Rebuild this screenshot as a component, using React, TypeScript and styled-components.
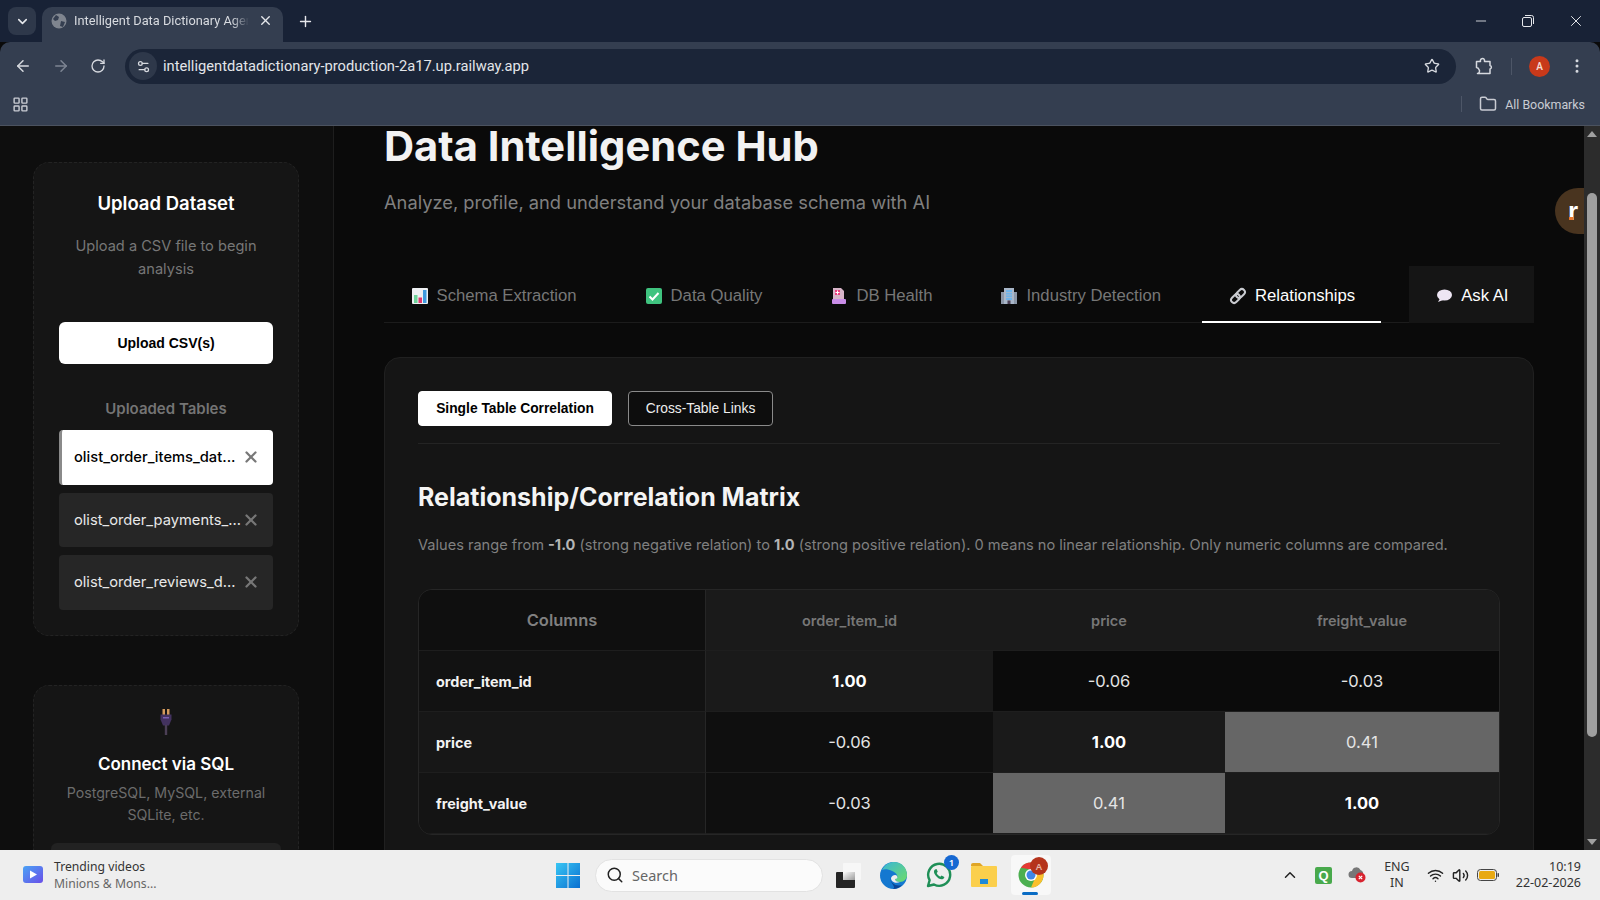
import React, { FunctionComponent } from 'react';
import styled, { createGlobalStyle } from 'styled-components';
import {
  ArrowLeft,
  ArrowRight,
  ChevronDown,
  ChevronUp,
  EllipsisVertical,
  Folder,
  LayoutGrid,
  Minus,
  Plus,
  RotateCw,
  Search,
  Settings2,
  Star,
  Volume2,
  Wifi,
  X,
} from 'lucide-react';

const SEGOE = '"Noto Sans", "Open Sans", sans-serif';
const CHROME = 'Roboto, "Noto Sans", sans-serif';
const INTER = 'Inter, "Liberation Sans", sans-serif';
const ARIAL = '"Liberation Sans", Arial, sans-serif';

const GlobalStyle = createGlobalStyle`
  html, body, #root {
    margin: 0;
    height: 100%;
    overflow: hidden;
  }

  body {
    background: #0a0a0a;
    font-family: ${INTER};
  }

  * {
    box-sizing: border-box;
  }
`;

const Screen = styled.div`
  display: flex;
  flex-direction: column;
  width: 1600px;
  height: 900px;
  overflow: hidden;
  position: relative;
`;

/* browser chrome */

const TabStrip = styled.div`
  display: flex;
  align-items: flex-end;
  height: 42px;
  padding-left: 8px;
  background: #182236;
  color: #e6e8ec;
  font-family: ${CHROME};
`;

const TabSearch = styled.div`
  display: flex;
  align-items: center;
  justify-content: center;
  width: 28px;
  height: 28px;
  margin-bottom: 7px;
  border-radius: 8px;
  background: #2e384a;
`;

const Tab = styled.div`
  display: flex;
  align-items: center;
  width: 241px;
  height: 35px;
  margin-left: 6px;
  padding: 0 10px 8px 9px;
  border-radius: 10px 10px 0 0;
  background: #343e50;
`;

const TabTitle = styled.span`
  flex: 1;
  margin: 0 9px 0 7px;
  overflow: hidden;
  white-space: nowrap;
  font-size: 12.8px;
  color: #d8dbe0;
  -webkit-mask-image: linear-gradient(90deg, #000 90%, transparent);
  mask-image: linear-gradient(90deg, #000 90%, transparent);
`;

const NewTab = styled.div`
  display: flex;
  align-self: center;
  margin-left: 14px;
`;

const WindowControls = styled.div`
  display: flex;
  align-self: center;
  align-items: center;
  gap: 33px;
  margin-left: auto;
  padding-right: 15px;
`;

const Toolbar = styled.div`
  display: flex;
  align-items: center;
  height: 46px;
  padding: 2px 14px 0 14px;
  border-radius: 10px 10px 0 0;
  background: #343e50;
  color: #d6d9df;
  font-family: ${CHROME};
`;

const NavButtons = styled.div`
  display: flex;
  align-items: center;
  gap: 20px;
`;

const Omnibox = styled.div`
  display: flex;
  align-items: center;
  width: 1331px;
  height: 35px;
  margin-left: 19px;
  padding: 0 16px 0 4px;
  border-radius: 18px;
  background: #1b2538;
`;

const SiteInfo = styled.div`
  display: flex;
  align-items: center;
  justify-content: center;
  width: 28px;
  height: 28px;
  border-radius: 50%;
  background: #2e384a;
`;

const Url = styled.span`
  flex: 1;
  margin-left: 6px;
  font-size: 14.7px;
  color: #e3e5ea;
`;

const ToolbarEnd = styled.div`
  display: flex;
  align-items: center;
  margin-left: 19px;
`;

const ToolbarDivider = styled.div`
  width: 1px;
  height: 17px;
  margin: 0 17px 0 18px;
  background: #4d5667;
`;

const Avatar = styled.div`
  display: flex;
  align-items: center;
  justify-content: center;
  width: 21px;
  height: 21px;
  border-radius: 50%;
  background: #c8391a;
  color: #f4d9d0;
  font-size: 10px;
  font-weight: 600;
`;

const ToolbarMenu = styled.div`
  display: flex;
  margin-left: 18px;
`;

const Bookmarks = styled.div`
  display: flex;
  align-items: center;
  height: 38px;
  padding: 0 15px 5px 12px;
  border-bottom: 1px solid #4b525f;
  background: #343e50;
  color: #c9ccd3;
  font-family: ${CHROME};
`;

const BookmarksEnd = styled.div`
  display: flex;
  align-items: center;
  gap: 8px;
  margin-left: auto;
  font-size: 12.4px;
`;

const BookmarksDivider = styled.div`
  width: 1px;
  height: 16px;
  margin-right: 9px;
  background: #4d5667;
`;

/* page */

const Viewport = styled.div`
  display: flex;
  flex: 1;
  min-height: 0;
  overflow: hidden;
  position: relative;
  background: #0a0a0a;
`;

const Sidebar = styled.aside`
  display: flex;
  flex-direction: column;
  flex: 0 0 334px;
  gap: 49px;
  padding: 36px 34px 0 33px;
  border-right: 1px solid #1e1e1e;
  background: #0e0e0e;
`;

const SideCard = styled.section`
  display: flex;
  flex-direction: column;
  flex: 0 0 auto;
  padding: 26px 25px 25px;
  border: 1px dashed #232323;
  border-radius: 16px;
  background: #151515;
  text-align: center;
`;

const SideTitle = styled.h3`
  margin: 0;
  font-size: 18.5px;
  line-height: 28px;
  font-weight: 600;
  color: #fff;
`;

const SideText = styled.p`
  margin: 18px 0 0;
  font-size: 14.6px;
  line-height: 23px;
  color: #777;
`;

const UploadButton = styled.button`
  height: 42px;
  margin-top: 41px;
  border: 0;
  border-radius: 6px;
  background: #fff;
  color: #000;
  font-family: ${ARIAL};
  font-size: 14px;
  font-weight: 700;
`;

const SideLabel = styled.div`
  margin-top: 35px;
  font-size: 15px;
  line-height: 20px;
  font-weight: 600;
  color: #747474;
`;

const FileList = styled.div`
  display: flex;
  flex-direction: column;
  gap: 8px;
  margin-top: 11px;
`;

const FileItem = styled.div<{ $active?: boolean }>`
  display: flex;
  align-items: center;
  justify-content: space-between;
  height: 54.5px;
  padding: 0 13px 0 ${({ $active }) => ($active ? '12px' : '15px')};
  border-left: ${({ $active }) => ($active ? '3px solid #8a8a8a' : '0')};
  border-radius: 4px;
  background: ${({ $active }) => ($active ? '#fff' : '#262626')};
  color: ${({ $active }) => ($active ? '#000' : '#e8e8e8')};
  font-size: 14.7px;
  font-weight: ${({ $active }) => ($active ? 500 : 400)};
  white-space: nowrap;
`;

const ConnectCard = styled(SideCard)`
  padding: 23px 17px 0;
`;

const ConnectTitle = styled(SideTitle)`
  margin-top: 11px;
  font-size: 17px;
`;

const ConnectText = styled(SideText)`
  margin-top: 4px;
  font-size: 14.2px;
  line-height: 22.5px;
  letter-spacing: 0;
  color: #6c6c6c;
`;

const ConnectInput = styled.div`
  height: 36px;
  margin-top: 16px;
  border-radius: 6px;
  background: #222;
`;

const Main = styled.main`
  flex: 1;
  min-width: 0;
  padding: 0 50px;
`;

const Heading = styled.h1`
  margin: 0;
  font-size: 41.7px;
  line-height: 40px;
  font-weight: 700;
  color: #f2f2f2;
`;

const Subtitle = styled.p`
  margin: 22px 0 0;
  font-size: 18.3px;
  line-height: 28px;
  color: #808080;
`;

const Tabs = styled.nav`
  display: flex;
  gap: 16px;
  margin-top: 50px;
  border-bottom: 1px solid #1c1c1c;
`;

const TabButton = styled.div<{ $active?: boolean; $end?: boolean }>`
  display: flex;
  align-items: center;
  gap: 8px;
  height: 57px;
  margin-bottom: -1px;
  margin-left: ${({ $end }) => ($end ? 'auto' : '0')};
  padding: 5px 25.5px 0 26.5px;
  border-bottom: 2px solid ${({ $active }) => ($active ? '#fff' : 'transparent')};
  background: ${({ $end }) => ($end ? '#151515' : 'transparent')};
  color: ${({ $active, $end }) => ($active || $end ? '#fff' : '#777')};
  font-family: ${ARIAL};
  font-size: 16.7px;
  white-space: nowrap;
`;

const Panel = styled.section`
  margin-top: 34px;
  padding: 33px;
  border: 1px solid #202020;
  border-radius: 16px;
  background: #151515;
`;

const SubTabs = styled.div`
  display: flex;
  gap: 16px;
  padding-bottom: 17px;
  border-bottom: 1px solid #242424;
`;

const SubTab = styled.div<{ $active?: boolean }>`
  display: flex;
  align-items: center;
  justify-content: center;
  height: 35px;
  padding: 0 0 1px;
  width: ${({ $active }) => ($active ? '194px' : '145px')};
  border: 1px solid ${({ $active }) => ($active ? '#fff' : '#8a8a8a')};
  border-radius: 4px;
  background: ${({ $active }) => ($active ? '#fff' : '#0d0d0d')};
  color: ${({ $active }) => ($active ? '#000' : '#eee')};
  font-family: ${ARIAL};
  font-size: 13.8px;
  font-weight: ${({ $active }) => ($active ? 700 : 400)};
`;

const MatrixTitle = styled.h2`
  margin: 35px 0 0;
  font-size: 25px;
  line-height: 36px;
  font-weight: 700;
  color: #f4f4f4;
`;

const MatrixNote = styled.p`
  margin: 18px 0 0;
  font-size: 14.58px;
  line-height: 24px;
  color: #808080;

  strong {
    color: #b5b5b5;
    font-weight: 700;
  }
`;

const MatrixGrid = styled.div`
  display: grid;
  grid-template-columns: 287px 287px 232px 1fr;
  grid-auto-rows: 61px;
  margin-top: 32px;
  overflow: hidden;
  border: 1px solid #262626;
  border-radius: 14px;
`;

const Cell = styled.div<{ $bg: string; $color?: string; $bold?: boolean; $left?: boolean; $size?: number; $rule?: boolean }>`
  display: flex;
  align-items: center;
  justify-content: ${({ $left }) => ($left ? 'flex-start' : 'center')};
  padding-left: ${({ $left }) => ($left ? '17px' : '0')};
  border-right: ${({ $rule }) => ($rule ? '1px solid #262626' : '0')};
  border-bottom: 1px solid #1e1e1e;
  background: ${({ $bg }) => $bg};
  color: ${({ $color }) => $color || '#e4e4e4'};
  font-size: ${({ $size }) => $size || 16.5}px;
  font-weight: ${({ $bold }) => ($bold ? 700 : 400)};
`;

const HeadCell = styled(Cell)`
  font-weight: 600;
`;

const ScrollTrack = styled.div`
  display: flex;
  flex-direction: column;
  align-items: center;
  flex: 0 0 16px;
  background: #2c2c2c;
`;

const ScrollArrow = styled.div<{ $down?: boolean }>`
  flex: 0 0 auto;
  width: 0;
  height: 0;
  margin: 5px 0;
  border-left: 5px solid transparent;
  border-right: 5px solid transparent;
  border-top: ${({ $down }) => ($down ? '6px solid #a0a0a0' : '0')};
  border-bottom: ${({ $down }) => ($down ? '0' : '6px solid #a0a0a0')};
`;

const ScrollThumb = styled.div`
  width: 10px;
  height: 544px;
  margin-top: 51px;
  margin-bottom: auto;
  border-radius: 5px;
  background: #9f9f9f;
`;

/* floats over the page, half hidden under the scrollbar */
const RailwayBadge = styled.div`
  position: absolute;
  top: 62px;
  right: 16px;
  display: flex;
  align-items: center;
  width: 29px;
  height: 46px;
  padding-left: 13px;
  border-radius: 23px 0 0 23px;
  background: #49341f;
  color: #fff;
  font-family: ${ARIAL};
  font-size: 26px;
  font-weight: 700;

  &:after {
    content: '';
    position: absolute;
    top: 29px;
    left: 14px;
    width: 4px;
    height: 3px;
    background: #e8772e;
  }
`;

/* taskbar */

const Taskbar = styled.footer`
  display: flex;
  align-items: center;
  flex: 0 0 50px;
  background: #eeeeee;
  color: #222;
  font-family: ${SEGOE};
`;

const Widget = styled.div`
  display: flex;
  align-items: center;
  gap: 11px;
  width: 556px;
  padding-left: 23px;
`;

const WidgetText = styled.div`
  font-size: 12.2px;
  line-height: 17px;
  color: #333;

  span {
    display: block;
    color: #666;
  }
`;

const Dock = styled.div`
  display: flex;
  align-items: center;
`;

const SearchBox = styled.div`
  display: flex;
  align-items: center;
  gap: 8px;
  width: 228px;
  height: 33px;
  margin: 0 3px 0 15px;
  padding-left: 10px;
  border: 1px solid #e2e2e2;
  border-radius: 17px;
  background: #fbfbfb;
  color: #666;
  font-size: 14.5px;
`;

const DockSlot = styled.div`
  position: relative;
  display: flex;
  align-items: center;
  justify-content: center;
  width: 45px;
  height: 40px;
`;

const ChromeSlot = styled(DockSlot)`
  width: 40px;
  margin-left: 5px;
  border-radius: 4px;
  background: #f8f8f8;

  &:after {
    content: '';
    position: absolute;
    bottom: 0;
    left: 11px;
    width: 16px;
    height: 3px;
    border-radius: 2px;
    background: #0a6cc4;
  }
`;

const Badge = styled.div<{ $bg: string }>`
  position: absolute;
  top: 0;
  right: 2px;
  display: flex;
  align-items: center;
  justify-content: center;
  width: 15px;
  height: 15px;
  border-radius: 50%;
  background: ${({ $bg }) => $bg};
  color: #fff;
  font-size: 9.5px;
  font-weight: 600;
`;

const ChromeBadge = styled(Badge)`
  top: 2px;
  right: 3px;
  width: 18px;
  height: 18px;
  color: #e6b4a6;
`;

const Tray = styled.div`
  display: flex;
  align-items: center;
  margin-left: auto;
  padding-right: 19px;
`;

const TrayIcon = styled.span<{ $gap?: number }>`
  display: flex;
  margin-left: ${({ $gap }) => $gap || 0}px;
`;

const Lang = styled.div`
  margin: 0 17px 0 18px;
  font-size: 12.5px;
  line-height: 16px;
  text-align: center;
  color: #333;
`;

const Clock = styled.div`
  margin-left: 17px;
  font-size: 12.5px;
  line-height: 16px;
  text-align: right;
  color: #333;
`;

const QTile = styled.div`
  display: flex;
  align-items: center;
  justify-content: center;
  width: 17px;
  height: 17px;
  border-radius: 2px;
  background: #48a94c;
  color: #fff;
  font-family: ${ARIAL};
  font-size: 13px;
  font-weight: 700;
`;

/* small drawings standing in for the emoji and app logos */

const BarChartEmoji: FunctionComponent = () => (
  <svg width="18" height="18" viewBox="0 0 18 18">
    <rect x="1" y="1" width="16" height="16" rx="1" fill="#eef0f3" />
    <rect x="3" y="8" width="3.5" height="8" fill="#6ed39a" />
    <rect x="7.5" y="10.5" width="3.5" height="5.5" fill="#e0386f" />
    <rect x="12" y="3" width="3.5" height="13" fill="#3f9be0" />
  </svg>
);

const CheckEmoji: FunctionComponent = () => (
  <svg width="18" height="18" viewBox="0 0 18 18">
    <rect x="1" y="1" width="16" height="16" rx="2" fill="#3fc37f" />
    <path d="M4.5 9.5l3 3 6-6.5" fill="none" stroke="#fff" strokeWidth="2" />
  </svg>
);

const HealthEmoji: FunctionComponent = () => (
  <svg width="18" height="18" viewBox="0 0 18 18">
    <path d="M3 1h8l3 3v9H3z" fill="#d7b4c8" />
    <rect x="5" y="3" width="5" height="5" fill="#e8407e" />
    <path d="M7.5 3.5v4M5.5 5.5h4" stroke="#fff" strokeWidth="1" />
    <rect x="2" y="12" width="14" height="5" rx="1" fill="#c98de8" />
  </svg>
);

const BuildingEmoji: FunctionComponent = () => (
  <svg width="18" height="18" viewBox="0 0 18 18">
    <rect x="1" y="5" width="16" height="12" fill="#8b97a8" />
    <rect x="4" y="1" width="10" height="16" fill="#a9b7c9" />
    <rect x="6" y="3" width="6" height="10" fill="#6fb4ea" />
    <path d="M6 5.5h6M6 8h6M6 10.5h6" stroke="#a9b7c9" strokeWidth="0.8" />
    <rect x="7.5" y="13.5" width="3" height="3.5" fill="#4b3f55" />
  </svg>
);

const LinkEmoji: FunctionComponent = () => (
  <svg width="18" height="18" viewBox="0 0 18 18" fill="none" stroke="#c9cbd0" strokeWidth="2">
    <rect x="0.5" y="6" width="10" height="6" rx="3" transform="rotate(-45 9 9)" />
    <rect x="7.5" y="6" width="10" height="6" rx="3" transform="rotate(-45 9 9)" />
  </svg>
);

const SpeechEmoji: FunctionComponent = () => (
  <svg width="18" height="18" viewBox="0 0 18 18">
    <ellipse cx="9.500" cy="8" rx="7.500" ry="5.500" fill="#eee6f4" />
    <path d="M5 11.500L3 15l5-2z" fill="#eee6f4" />
  </svg>
);

const PlugEmoji: FunctionComponent = () => (
  <svg width="14" height="26" viewBox="0 0 14 26">
    <rect x="3.500" y="0" width="2.500" height="6" fill="#d39a5c" />
    <rect x="8" y="0" width="2.500" height="6" fill="#d39a5c" />
    <path d="M1.500 5.500h11v5l-2.500 6H4l-2.500-6z" fill="#43325f" />
    <rect x="4" y="8" width="6" height="1.500" fill="#7a5fb0" />
    <rect x="5.800" y="16" width="2.400" height="10" fill="#4b3f55" />
  </svg>
);

const Favicon: FunctionComponent = () => (
  <svg width="16" height="16" viewBox="0 0 16 16">
    <circle cx="8" cy="8" r="7.500" fill="#7f858f" />
    <path d="M5 2l3 2-1 3-3 1-2-2zM10 8l4 1-2 5-3-1z" fill="#343e50" />
  </svg>
);

const RestoreIcon: FunctionComponent = () => (
  <svg width="12" height="12" viewBox="0 0 12 12" fill="none" stroke="#e6e8ec" strokeWidth="1">
    <rect x="0.500" y="2.500" width="9" height="9" rx="1.500" />
    <path d="M3 0.500h6.500a2 2 0 0 1 2 2V9" />
  </svg>
);

const ExtensionIcon: FunctionComponent = () => (
  <svg width="18" height="18" viewBox="0 0 18 18" fill="none" stroke="#d6d9df" strokeWidth="1.500" strokeLinejoin="round">
    <path d="M1.500 4.500h4a2 2 0 0 1 4-1.500v1.500h5.500v4a1.800 1.800 0 0 1 0 3.500v4.500H2.500a2.500 2.500 0 0 0 1.500-4 3 3 0 0 0-2.500-2z" />
  </svg>
);

const VideoTile: FunctionComponent = () => (
  <svg width="20" height="18" viewBox="0 0 20 18">
    <defs>
      <linearGradient id="videoTile" x1="0" y1="0" x2="1" y2="1">
        <stop offset="0" stopColor="#4aa3f5" />
        <stop offset="1" stopColor="#6a4ee8" />
      </linearGradient>
    </defs>
    <rect width="20" height="17" rx="3" fill="url(#videoTile)" />
    <path d="M7 4.500l7 4-7 4z" fill="#fff" />
  </svg>
);

const WindowsLogo: FunctionComponent = () => (
  <svg width="24" height="25" viewBox="0 0 24 25">
    <defs>
      <linearGradient id="winLogo" x1="0" y1="0" x2="1" y2="1">
        <stop offset="0" stopColor="#38c6f4" />
        <stop offset="1" stopColor="#0a6fd0" />
      </linearGradient>
    </defs>
    <path d="M0 0h11.500v12H0zM12.500 0H24v12H12.500zM0 13h11.500v12H0zM12.500 13H24v12H12.500z" fill="url(#winLogo)" />
  </svg>
);

const TaskView: FunctionComponent = () => (
  <svg width="25" height="25" viewBox="0 0 25 25">
    <defs>
      <linearGradient id="taskBack" x1="0" y1="0" x2="1" y2="1">
        <stop offset="0" stopColor="#ffffff" />
        <stop offset="1" stopColor="#9a9a9a" />
      </linearGradient>
    </defs>
    <rect x="7" y="0" width="18" height="17" rx="1" fill="#f7f7f7" />
    <rect x="0" y="9" width="19" height="16" rx="1" fill="#242424" />
    <rect x="7" y="9" width="12" height="8" fill="url(#taskBack)" />
  </svg>
);

const EdgeLogo: FunctionComponent = () => (
  <svg width="27" height="27" viewBox="0 0 27 27">
    <defs>
      <linearGradient id="edgeTop" x1="0" y1="0" x2="1" y2="1">
        <stop offset="0" stopColor="#38b6d8" />
        <stop offset="1" stopColor="#6fdc6a" />
      </linearGradient>
    </defs>
    <circle cx="13.500" cy="13.500" r="13.500" fill="#1478d0" />
    <path d="M2 8C5 2 10 0 14 0c8 0 13 6 13 13 0 4-3 7-7 7-3 0-5-1-5-3 2 0 3-2 2-4-2-4-11-7-15-5z" fill="url(#edgeTop)" />
    <path d="M10 15c0 6 6 10 12 8a13 13 0 0 1-9 4c4-2-4-7-3-12z" fill="#0b4596" />
    <path d="M11 16c1-3 5-4 6-2s0 3-2 3c0 2 2 3 5 3-4 2-9 0-9-4z" fill="#eeeeee" />
  </svg>
);

const WhatsAppLogo: FunctionComponent = () => (
  <svg width="26" height="26" viewBox="0 0 26 26">
    <path
      d="M2 24l1.600-5.800A11 11 0 1 1 8 22.500z"
      fill="none"
      stroke="#1f8f57"
      strokeWidth="2.400"
      strokeLinejoin="round"
    />
    <path
      d="M9 7.500c-1.500 1.200-1.500 3.500.8 6.300 2.300 2.800 4.800 4 6.700 3.400 1.200-.4 2-1.500 1.800-2.200l-2.800-1.500-1.200 1.200c-1.500-.6-3-2.200-3.600-3.700l1.100-1.200-1.300-2.800z"
      fill="#1f8f57"
    />
  </svg>
);

const FolderLogo: FunctionComponent = () => (
  <svg width="26" height="24" viewBox="0 0 26 24">
    <path d="M0 2a2 2 0 0 1 2-2h7l3 3H0z" fill="#e0a526" />
    <rect x="0" y="3" width="26" height="21" rx="1" fill="#fbcf4c" />
    <rect x="9" y="16" width="8" height="5" fill="#1f8ad6" />
  </svg>
);

const ChromeLogo: FunctionComponent = () => (
  <svg width="26" height="26" viewBox="0 0 26 26">
    <circle cx="13" cy="13" r="12.500" fill="#4caf50" />
    <path d="M13 .5A12.500 12.500 0 0 1 23.800 6.700L13 7.500 2.800 5.800A12.500 12.500 0 0 1 13 .5z" fill="#e53935" />
    <path d="M23.800 6.700A12.500 12.500 0 0 1 13 25.500L18 14z" fill="#fbc02d" />
    <circle cx="13" cy="13" r="6" fill="#fff" />
    <circle cx="13" cy="13" r="4.500" fill="#3f86e8" />
  </svg>
);

const CloudAlert: FunctionComponent = () => (
  <svg width="18" height="16" viewBox="0 0 18 16">
    <path d="M4 11a3.500 3.500 0 0 1 0-7 4.500 4.500 0 0 1 8.500-1 3.500 3.500 0 0 1 1.500 6l-4 2z" fill="#777" />
    <circle cx="12.500" cy="10.500" r="5" fill="#d8232f" />
    <path d="M10.800 8.800l3.400 3.400M14.200 8.800l-3.400 3.400" stroke="#fff" strokeWidth="1.200" />
  </svg>
);

const Battery: FunctionComponent = () => (
  <svg width="22" height="12" viewBox="0 0 22 12">
    <rect x="0.500" y="0.500" width="19" height="11" rx="3" fill="none" stroke="#444" />
    <rect x="2" y="2" width="16" height="8" rx="1.500" fill="#e8a912" />
    <rect x="20.500" y="4" width="1.500" height="4" rx="0.700" fill="#444" />
  </svg>
);

const tabs = [
  { label: 'Schema Extraction', icon: <BarChartEmoji /> },
  { label: 'Data Quality', icon: <CheckEmoji /> },
  { label: 'DB Health', icon: <HealthEmoji /> },
  { label: 'Industry Detection', icon: <BuildingEmoji /> },
];

const columns = ['order_item_id', 'price', 'freight_value'];

const matrix = [
  { name: 'order_item_id', label: '#121212', cells: [['1.00', '#1a1a1a'], ['-0.06', '#0b0b0b'], ['-0.03', '#0b0b0b']] },
  { name: 'price', label: '#171717', cells: [['-0.06', '#0f0f0f'], ['1.00', '#1a1a1a'], ['0.41', '#666666']] },
  { name: 'freight_value', label: '#141414', cells: [['-0.03', '#0f0f0f'], ['0.41', '#666666'], ['1.00', '#1a1a1a']] },
];

const files = ['olist_order_items_dat...', 'olist_order_payments_...', 'olist_order_reviews_d...'];

export default function App() {
  return (
    <Screen>
      <GlobalStyle />

      <TabStrip>
        <TabSearch>
          <ChevronDown size={15} strokeWidth={2.5} />
        </TabSearch>
        <Tab>
          <Favicon />
          <TabTitle>Intelligent Data Dictionary Agent</TabTitle>
          <X size={15} strokeWidth={2.2} />
        </Tab>
        <NewTab>
          <Plus size={17} />
        </NewTab>
        <WindowControls>
          <Minus size={16} strokeWidth={1.3} />
          <RestoreIcon />
          <X size={18} strokeWidth={1.3} />
        </WindowControls>
      </TabStrip>

      <Toolbar>
        <NavButtons>
          <ArrowLeft size={18} />
          <ArrowRight size={18} color="#7d8593" />
          <RotateCw size={16} />
        </NavButtons>
        <Omnibox>
          <SiteInfo>
            <Settings2 size={15} />
          </SiteInfo>
          <Url>intelligentdatadictionary-production-2a17.up.railway.app</Url>
          <Star size={16} />
        </Omnibox>
        <ToolbarEnd>
          <ExtensionIcon />
          <ToolbarDivider />
          <Avatar>A</Avatar>
          <ToolbarMenu>
            <EllipsisVertical size={18} />
          </ToolbarMenu>
        </ToolbarEnd>
      </Toolbar>

      <Bookmarks>
        <LayoutGrid size={17} />
        <BookmarksEnd>
          <BookmarksDivider />
          <Folder size={18} />
          All Bookmarks
        </BookmarksEnd>
      </Bookmarks>

      <Viewport>
        <Sidebar>
          <SideCard>
            <SideTitle>Upload Dataset</SideTitle>
            <SideText>Upload a CSV file to begin analysis</SideText>
            <UploadButton>Upload CSV(s)</UploadButton>
            <SideLabel>Uploaded Tables</SideLabel>
            <FileList>
              {files.map((file, index) => (
                <FileItem key={file} $active={index === 0}>
                  {file}
                  <X size={18} color="#777" strokeWidth={3} />
                </FileItem>
              ))}
            </FileList>
          </SideCard>

          <ConnectCard>
            <div>
              <PlugEmoji />
            </div>
            <ConnectTitle>Connect via SQL</ConnectTitle>
            <ConnectText>PostgreSQL, MySQL, external SQLite, etc.</ConnectText>
            <ConnectInput />
          </ConnectCard>
        </Sidebar>

        <Main>
          <Heading>Data Intelligence Hub</Heading>
          <Subtitle>Analyze, profile, and understand your database schema with AI</Subtitle>

          <Tabs>
            {tabs.map((tab) => (
              <TabButton key={tab.label}>
                {tab.icon}
                {tab.label}
              </TabButton>
            ))}
            <TabButton $active>
              <LinkEmoji />
              Relationships
            </TabButton>
            <TabButton $end>
              <SpeechEmoji />
              Ask AI
            </TabButton>
          </Tabs>

          <Panel>
            <SubTabs>
              <SubTab $active>Single Table Correlation</SubTab>
              <SubTab>Cross-Table Links</SubTab>
            </SubTabs>

            <MatrixTitle>Relationship/Correlation Matrix</MatrixTitle>
            <MatrixNote>
              Values range from <strong>-1.0</strong> (strong negative relation) to <strong>1.0</strong> (strong
              positive relation). 0 means no linear relationship. Only numeric columns are compared.
            </MatrixNote>

            <MatrixGrid>
              <HeadCell $bg="#0f0f0f" $color="#808080" $size={16.5} $rule>
                Columns
              </HeadCell>
              {columns.map((column) => (
                <HeadCell key={column} $bg="#1a1a1a" $color="#777" $size={14.5}>
                  {column}
                </HeadCell>
              ))}
              {matrix.map((row) => (
                <React.Fragment key={row.name}>
                  <Cell $bg={row.label} $color="#f2f2f2" $bold $left $rule $size={14.4}>
                    {row.name}
                  </Cell>
                  {row.cells.map(([value, bg], index) => (
                    <Cell key={index} $bg={bg} $bold={value === '1.00'} $color={value === '1.00' ? '#fff' : '#e4e4e4'}>
                      {value}
                    </Cell>
                  ))}
                </React.Fragment>
              ))}
            </MatrixGrid>
          </Panel>
        </Main>

        <ScrollTrack>
          <ScrollArrow />
          <ScrollThumb />
          <ScrollArrow $down />
        </ScrollTrack>
        <RailwayBadge>r</RailwayBadge>
      </Viewport>

      <Taskbar>
        <Widget>
          <VideoTile />
          <WidgetText>
            Trending videos
            <span>Minions &amp; Mons...</span>
          </WidgetText>
        </Widget>
        <Dock>
          <WindowsLogo />
          <SearchBox>
            <Search size={18} color="#222" />
            Search
          </SearchBox>
          <DockSlot>
            <TaskView />
          </DockSlot>
          <DockSlot>
            <EdgeLogo />
          </DockSlot>
          <DockSlot>
            <WhatsAppLogo />
            <Badge $bg="#1668d2">1</Badge>
          </DockSlot>
          <DockSlot>
            <FolderLogo />
          </DockSlot>
          <ChromeSlot>
            <ChromeLogo />
            <ChromeBadge $bg="#b5341c">A</ChromeBadge>
          </ChromeSlot>
        </Dock>
        <Tray>
          <ChevronUp size={18} />
          <TrayIcon $gap={16}>
            <QTile>Q</QTile>
          </TrayIcon>
          <TrayIcon $gap={16}>
            <CloudAlert />
          </TrayIcon>
          <Lang>
            ENG
            <br />
            IN
          </Lang>
          <TrayIcon>
            <Wifi size={17} />
          </TrayIcon>
          <TrayIcon $gap={8}>
            <Volume2 size={17} />
          </TrayIcon>
          <TrayIcon $gap={8}>
            <Battery />
          </TrayIcon>
          <Clock>
            10:19
            <br />
            22-02-2026
          </Clock>
        </Tray>
      </Taskbar>
    </Screen>
  );
}
